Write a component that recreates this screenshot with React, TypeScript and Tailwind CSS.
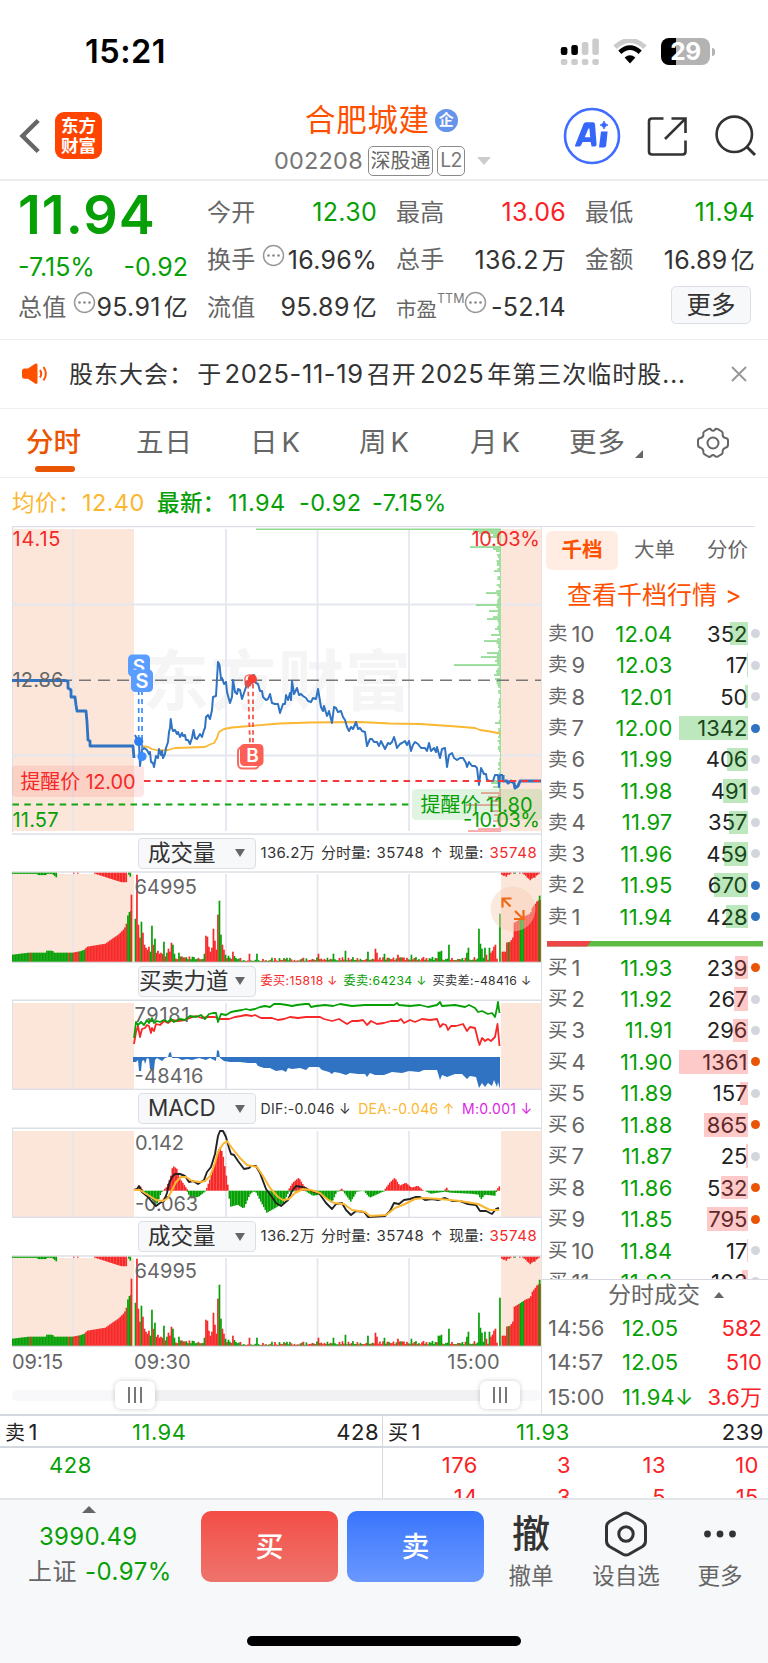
import React from 'react';
import clsx from 'clsx';

const RED = '#f62828';
const GREEN = '#06a006';
const BLUE = '#2f73c2';

type Bar = [x: number, height: number, color: string];

// small repeatable noise, so that the bars keep their shape between renders
const noise = (n: number) => {
    const v = Math.sin(n * 127.1 + 3.7) * 43758.5453;
    return v - Math.floor(v);
};

const interpolate = (stops: number[][], x: number) => {
    for (let i = 1; i < stops.length; i++) {
        if (x <= stops[i][0]) {
            const [x0, y0] = stops[i - 1];
            const [x1, y1] = stops[i];
            return y0 + ((x - x0) / (x1 - x0)) * (y1 - y0);
        }
    }
    return stops[stops.length - 1][1];
};

/* ---------- chart data ---------- */

const preOpenLine = '12,680.5 65,680.5 68,681.5 68,688 71,690 71,697 75,697 76,705 77,711 86,711 87,722 88,740 90,741 90,746 133,746 134,758';

const priceLine =
    '135,735 139,743 140,766 142,750 144,748 147,750 149,754 150,752 151,762 153,763 154,767 156,756 158,758 159,749 161,755 162,751 163,758 165,754 166,748 168,742 169,732 170,728 170.7,719 172,728 173,731 175,730 177,734 178,732 180,737 182,733 183,736 185,735 186,740 188,740 190,744 192,738 193.5,730 195,738 197,739 200,734 202,737 204,730 205,728 206,717 208,715 210,719 212,710 213,697 216,696 218,662 219.5,665 221,679 222,678 224,684 226,682 227,692 230,703 232,697 233,680 235,692 237,694 238,689 240,690 242,699 245,690 247,684 249,682 252,676 254,675 256,683 258,684 260,691 262,691 263,697 266,700 268,699 270,694 272,703 275,704 278,704 280,713 283,704 285,704 286,695 288,700 290,693 291,700 292,681 294,694 297,688 299,695 301,694 303,696 306,698 308,701 311,702 313,698 316,699 318,689 321,707 323,711 324,706 327,716 329,711 332,723 334,707 336,708 338,712 341,711 343,717 345,720 347,727 349,731 351,727 353,729 356,722 358,729 360,728 362,731 365,732 367,746 370,739 372,739 374,742 377,742 379,746 381,741 383,745 385,749 388,743 390,744 392,742 394,737 395,740 397,748 400,744 402,743 405,741 407,745 409,741 411,751 413,745 415,742 418,744 421,748 425,748 427,751 429,743 431,751 434,748 436,752 437,747 440,758 442,749 445,748 447,767 449,755 452,753 454,758 457,760 460,758 463,758 466,763 467,767 469,762 472,766 475,766 477,768 479,785 481,768 484,774 486,774 487,780 490,781 493,781 495,775 498,775 499,787 500,775 503,775';

const afterLine = '503,775 503,781 507,781 508,783 511,781 514,783 515,788 518,786 520,781 541,781';
const averageLine = '142,746 148,747 152,749 158,750.5 168,750 175,748 205,747 210,744.5 214,743 217,738 219,732 224,729 232,727.5 250,726 280,723.5 310,722.5 360,722 390,723.5 420,724 450,726 475,728 480,730 490,731.5 500,733.5';

const ladderSpikes: Record<number, number> = {
    531: 28, 533: 22, 535: 8, 537: 13, 543: 4, 547: 31, 549: 8, 551: 5, 571: 7, 593: 15, 605: 25, 611: 12, 617: 8, 619: 14, 629: 6,
    635: 10, 641: 17, 653: 14, 657: 20, 661: 6, 665: 47, 671: 5, 675: 7, 679: 6, 681: 5, 723: 6, 781: 14, 783: 10, 787: 8,
    793: 20, 797: 13, 801: 9, 805: 35, 811: 11, 815: 7, 821: 8, 829: 23, 831: 33,
};

const preOpenHeights = [[12, 7], [28, 9], [45, 9], [46, 11], [52, 11], [54, 9], [72, 9], [80, 10.5], [84, 12], [87, 15], [105, 18], [112, 23], [118, 27], [124, 33], [126, 38], [128, 49], [131, 51]];
const afterHeights = [[502, 10], [505, 10], [506, 19], [510, 20], [513, 25], [514, 39], [519, 42], [525, 46], [530, 48], [532, 54], [535, 58], [537, 61], [541, 62]];

const sessionSpikes: Bar[] = [
    [135, 43, GREEN], [136.5, 87, RED], [138, 37, RED], [139.5, 24, RED], [141, 40, GREEN], [142.5, 29, RED], [144, 17, RED], [145.5, 14, RED], [147, 12, RED],
    [148.5, 15, RED], [150, 10, GREEN], [151.5, 36, GREEN], [153, 17, RED], [154.5, 23, GREEN], [156, 9, RED], [157.5, 11, RED], [159, 8, RED], [160.5, 9, RED],
    [163.5, 20, GREEN], [166.5, 9, GREEN], [168, 13, RED], [169.5, 10, RED], [171, 19, RED], [172.5, 17, GREEN], [174, 8, GREEN], [178.5, 9, GREEN],
    [204, 8, GREEN], [205.5, 26, RED], [207, 25, RED], [208.5, 15, RED], [210, 10, RED], [211.5, 14, RED], [213, 33, RED], [214.5, 21, RED], [216, 12, RED],
    [217.5, 47, RED], [219, 61, GREEN], [220.5, 27, GREEN], [222, 17, RED], [223.5, 12, RED], [225, 7, GREEN], [228, 6, GREEN], [232.5, 10, RED], [249, 8, RED],
    [256.5, 8, GREEN], [271.5, 4, GREEN], [318, 8, RED], [333, 8, GREEN], [345, 11, GREEN], [367.5, 10, GREEN], [375, 13, RED], [376.5, 9, RED], [384, 8, GREEN],
    [397.5, 7, RED], [411, 7, GREEN], [438, 10, GREEN], [439.5, 10, GREEN], [441, 11, GREEN], [448.5, 17, GREEN], [466.5, 9, GREEN], [468, 14, GREEN],
    [478.5, 33, GREEN], [480, 18, GREEN], [481.5, 13, GREEN], [484.5, 14, GREEN], [486, 7, RED], [489, 14, GREEN], [490.5, 9, RED], [492, 11, RED],
    [493.5, 15, RED], [495, 17, RED], [499.5, 48, GREEN],
];

const volumeBars: Bar[] = [];
for (let x = 12; x < 131; x += 1.5) {
    const green = x < 29 || (x > 31 && x < 68) || (x > 69 && x < 73) || (x > 79 && x < 85) || x > 127;
    volumeBars.push([x, interpolate(preOpenHeights, x), green ? GREEN : RED]);
}
volumeBars.push([131, 67, RED]);
for (let x = 135; x < 497; x += 1.5) {
    if (sessionSpikes.some((s) => s[0] === x)) continue;
    const base = x < 165 ? 6 : x < 240 ? 3 : x < 310 ? 1.4 : 2;
    const r = noise(x);
    volumeBars.push([x, base + r * r * 3.4 - 0.6, noise(x + 9) > 0.5 ? RED : GREEN]);
}
volumeBars.push(...sessionSpikes);
for (let x = 502; x < 540; x += 1.5) {
    volumeBars.push([x, interpolate(afterHeights, x), (x > 519 && x < 524) || (x > 507 && x < 509) ? GREEN : RED]);
}
volumeBars.push([539.2, 66, GREEN]);

// unmatched orders hang from the top edge
const hangingBars: Bar[] = [];
for (let x = 12; x < 57; x += 1.5) {
    hangingBars.push([x, x > 51 ? (x - 50) * 0.85 : x > 36 && x < 46 ? 2.4 : 1.2, GREEN]);
}
for (let x = 94; x < 127; x += 1.5) {
    hangingBars.push([x, Math.min(9.5, 1 + (x - 94) * 0.32), RED]);
}
hangingBars.push([128, 2, GREEN], [129.5, 4, GREEN], [73, 1, RED], [77, 1, RED]);
[2, 3, 3, 4, 2, 2, 1, 0, 1, 1, 0, 0, 1, 0, 1, 2, 3, 5, 6, 7.5, 6, 5, 5, 3, 2, 1].forEach((h, i) => {
    hangingBars.push([501 + i * 1.5, h, i === 9 ? GREEN : RED]);
});

const sellForce =
    '134,1038 136,1022 138,1025 141,1022 144,1025 147,1020 149,1023 152,1018 154,1023 157,1021 160,1022 164,1020 168,1022 171,1019 174,1022 180,1019 185,1020 190,1016 196,1017 201,1015 205,1019 209,1014 213,1013 216,1013 218,1022 221,1014 226,1015 231,1012 236,1011 242,1010 246,1009 250,1010 255,1009 260,1007 265,1006 270,1007 274,1004 280,1004 287,1005 292,1006 297,1005 305,1004 309,1004 311,1007 316,1006 325,1005 333,1006 340,1004 352,1006 365,1005 380,1005 394,1005 397,1003 399,1005 410,1006 420,1005 428,1007 437,1005 440,1002 442,1006 455,1005 465,1007 469,1005 475,1008 478,1012 482,1011 488,1014 492,1013 495,1017 497,1008 498,1002 499.5,1013';
const buyForce =
    '134,1044 136,1032 138,1026 140,1037 142,1029 145,1028 147,1025 149,1026 151,1033 152,1028 154,1031 156,1024 160,1025 164,1021 168,1023 172,1020 178,1021 185,1020 190,1018 196,1016 202,1018 208,1017 215,1017 219,1019 224,1019 229,1019 235,1017 241,1016 246,1015 252,1016 255,1015 261,1018 266,1018 272,1018 278,1020 284,1019 290,1017 298,1018 306,1017 320,1017 324,1019 332,1021 339,1019 347,1024 352,1021 358,1021 363,1020 367,1025 371,1021 377,1024 384,1023 391,1021 398,1021 401,1019 404,1023 410,1020 415,1022 422,1019 430,1020 437,1019 440,1027 443,1024 446,1025 448,1030 451,1026 456,1026 463,1024 467,1031 470,1027 475,1028 478,1040 479.5,1045 482,1038 485,1041 488,1039 491,1041 495,1037 497.5,1024 499.5,1046';
const forceArea =
    '133,1057 133,1062 136,1062 138,1060 139,1071 141,1071 142,1061 144,1060 145,1064 147,1058 149,1059 150,1069 154,1070 155,1060 157,1058 162,1061 165,1058 168,1057 169,1053 171,1052 172,1058 178,1058 182,1060 187,1059 192,1060 199,1058 206,1060 210,1058 216,1061 217,1050 219,1051 220,1058 224,1061 230,1062 240,1062 248,1063 256,1063 258,1066 264,1068 270,1068 276,1071 282,1070 286,1072 288,1068 292,1069 300,1068 306,1070 309,1067 319,1067 322,1070 329,1072 332,1074 334,1072 340,1073 346,1075 350,1073 358,1074 365,1074 367,1077 370,1073 375,1075 384,1075 392,1072 402,1073 409,1071 419,1072 424,1070 437,1070 440,1080 442,1075 447,1077 455,1074 462,1074 467,1079 470,1076 476,1077 479,1088 482,1083 485,1087 488,1083 492,1086 494,1080 497,1087 498,1082 500,1089 500,1057';

const dif =
    '134,1190 137,1189 139,1186 142,1192 148,1197 152,1202 156,1206 160,1203 164,1201 167,1193 169,1184 172,1177 175,1174 180,1174 185,1176 189,1182 193,1181 198,1184 204,1180 207,1172 211,1167 215,1154 218,1136 220,1131 223,1131 226,1137 229,1148 231,1154 234,1155 238,1161 244,1169 249,1168 251,1166 256,1166 260,1173 266,1189 272,1197 276,1203 281,1206 288,1200 292,1191 296,1186 302,1187 307,1189 314,1192 319,1193 326,1203 332,1209 336,1204 342,1203 346,1210 351,1215 356,1211 364,1212 368,1217 385,1216 390,1211 394,1203 399,1204 404,1200 410,1199 416,1197 420,1197 425,1200 432,1199 438,1200 445,1198 452,1201 460,1201 468,1204 476,1205 480,1211 486,1211 492,1214 496,1209 499,1208';
const dea =
    '134,1190 140,1190 148,1195 156,1200 163,1201 168,1198 172,1190 176,1182 181,1177 186,1177 192,1181 200,1182 205,1181 210,1176 214,1166 218,1152 223,1144 227,1141 232,1148 240,1158 247,1165 252,1166 257,1167 263,1176 270,1188 278,1197 283,1200 289,1199 295,1193 303,1189 311,1190 320,1193 327,1199 334,1203 344,1204 352,1210 365,1212 370,1216 386,1215 395,1208 405,1204 415,1199 424,1198 440,1199 460,1201 478,1204 490,1210 499,1210';

const macdUp = [[134, 0], [137, 2], [139, 6], [141, 2], [143, 0], [162, 0], [166, 4], [170, 15], [172, 25], [176, 22], [180, 11], [186, 2], [188, 0], [205, 0], [210, 14], [215, 31], [219, 45], [222, 37], [226, 12], [228, 0], [287, 0], [292, 8], [298, 13], [303, 5], [310, 0], [338, 0], [341, 2], [343, 0], [383, 0], [389, 8], [394, 13], [399, 5], [405, 8], [411, 3], [417, 5], [423, 0], [443, 0], [446, 3], [448, 0], [495, 0], [499, 5]];
const macdDown = [[139, 0], [148, 6], [156, 14], [160, 3], [162, 0], [186, 0], [190, 8], [198, 6], [204, 1], [206, 0], [227, 0], [230, 16], [237, 14], [243, 18], [249, 4], [252, 1], [255, 1], [259, 9], [266, 22], [275, 17], [283, 12], [288, 1], [304, 0], [312, 5], [320, 4], [331, 12], [336, 1], [342, 0], [350, 11], [356, 1], [363, 0], [369, 7], [382, 1], [386, 0], [424, 0], [430, 3], [444, 1], [450, 2], [470, 3], [478, 4], [480, 9], [484, 4], [494, 5], [496, 0], [499, 0]];

/* ---------- order book ---------- */

type Level = { name: string; price: string; volume: number; dot: string };

const sells: Level[] = [
    { name: '卖10', price: '12.04', volume: 352, dot: 'bg-[#d3d6dd]' },
    { name: '卖9', price: '12.03', volume: 17, dot: 'bg-[#d3d6dd]' },
    { name: '卖8', price: '12.01', volume: 50, dot: 'bg-[#d3d6dd]' },
    { name: '卖7', price: '12.00', volume: 1342, dot: 'bg-[#2f73c2]' },
    { name: '卖6', price: '11.99', volume: 406, dot: 'bg-[#d3d6dd]' },
    { name: '卖5', price: '11.98', volume: 491, dot: 'bg-[#d3d6dd]' },
    { name: '卖4', price: '11.97', volume: 357, dot: 'bg-[#d3d6dd]' },
    { name: '卖3', price: '11.96', volume: 459, dot: 'bg-[#d3d6dd]' },
    { name: '卖2', price: '11.95', volume: 670, dot: 'bg-[#2f73c2]' },
    { name: '卖1', price: '11.94', volume: 428, dot: 'bg-[#2f73c2]' },
];

const buys: Level[] = [
    { name: '买1', price: '11.93', volume: 239, dot: 'bg-[#ea5504]' },
    { name: '买2', price: '11.92', volume: 267, dot: 'bg-[#d3d6dd]' },
    { name: '买3', price: '11.91', volume: 296, dot: 'bg-[#d3d6dd]' },
    { name: '买4', price: '11.90', volume: 1361, dot: 'bg-[#ea5504]' },
    { name: '买5', price: '11.89', volume: 157, dot: 'bg-[#d3d6dd]' },
    { name: '买6', price: '11.88', volume: 865, dot: 'bg-[#ea5504]' },
    { name: '买7', price: '11.87', volume: 25, dot: 'bg-[#d3d6dd]' },
    { name: '买8', price: '11.86', volume: 532, dot: 'bg-[#ea5504]' },
    { name: '买9', price: '11.85', volume: 795, dot: 'bg-[#ea5504]' },
    { name: '买10', price: '11.84', volume: 17, dot: 'bg-[#d3d6dd]' },
    { name: '买11', price: '11.83', volume: 103, dot: 'bg-[#d3d6dd]' },
];

function LevelRow({ level, side }: { level: Level; side: 'sell' | 'buy' }) {
    return (
        <div className="flex h-[31.44px] shrink-0 items-center pl-[6px] text-[22px] leading-none">
            <span className="flex w-[48px] items-center gap-[4px] text-[#666]">
                <span className="text-[19.5px]">{level.name[0]}</span>
                {level.name.slice(1)}
            </span>
            <span className="w-[76.5px] text-right tracking-[0.2px] text-[#06a006]">{level.price}</span>
            <span className="relative flex h-[23.5px] w-[75px] items-center justify-end text-[#222]">
                {level.volume}
                <span
                    className={clsx('absolute inset-y-0 right-0', side === 'sell' ? 'bg-[#0ca50c]/27' : 'bg-[#fa3c3c]/28')}
                    style={{ width: level.volume * 0.0507 }}
                />
            </span>
            <span className={clsx('ml-[3.5px] size-[9px] rounded-full', level.dot)} />
        </div>
    );
}

/* ---------- header parts ---------- */

function StatusBar() {
    return (
        <div className="flex h-[100px] items-center pl-[85px] pt-[3px]">
            <span className="w-[475px] pt-[2px] text-[32.5px] font-semibold tracking-[0.5px] text-black">15:21</span>
            <svg width="39" height="28" className="mt-[-1px]">
                {[0, 1, 2, 3].map((i) => (
                    <g key={i}>
                        <rect x={0.8 + i * 10.5} y={[10, 8, 5, 1.5][i]} width="6.6" height={[8, 10, 13, 16.5][i]} rx="2.2" fill={i < 2 ? '#000' : '#ccc'} />
                        <rect x={0.8 + i * 10.5} y="22" width="6.6" height="6" rx="2.2" fill="#ccc" />
                    </g>
                ))}
            </svg>
            <svg width="34" height="26" viewBox="0 0 34 26" className="ml-[14px]">
                <path d="M2 8.2Q17-5.2 32 8.2" fill="none" stroke="#ccc" strokeWidth="5" />
                <path d="M6.8 13.2Q17 4 27.2 13.2" fill="none" stroke="#000" strokeWidth="4.6" />
                <path d="M11.6 18.4Q17 14 22.4 18.4L17 24.4Z" fill="#000" />
            </svg>
            <div className="relative ml-[14px] h-[27px] w-[49px] rounded-[8px] bg-[linear-gradient(90deg,#000_15px,#b3b3b3_15px)] text-center text-[24.5px] font-bold leading-[27px] tracking-[-0.5px] text-white">29</div>
            <div className="ml-[1.5px] h-[8px] w-[3px] rounded-r-full bg-[#b3b3b3]" />
        </div>
    );
}

function TitleBar() {
    return (
        <header className="flex h-[81px] border-b-2 border-[#ececec]">
            <svg width="24" height="40" className="ml-[18px] mt-[16px]" fill="none" stroke="#666" strokeWidth="4.4">
                <path d="M20.2 4.5L4.5 20L20.2 35.5" />
            </svg>
            <div className="ml-[13px] mt-[12px] flex h-[47px] w-[47px] flex-col items-center justify-center rounded-[9px] bg-[#ff4400] text-[17.5px] font-bold leading-[19.5px] text-white">
                <span>东方</span>
                <span>财富</span>
            </div>
            <div className="ml-[158px] mt-[4px] w-[303px]">
                <div className="ml-[45px] flex h-[32px] items-center">
                    <span className="text-[30.5px] leading-none tracking-[0.7px] text-[#ff5000]">合肥城建</span>
                    <span className="ml-[5px] flex size-[23px] items-center justify-center rounded-full bg-[#6594ea] text-[15px] font-bold text-white">企</span>
                </div>
                <div className="ml-[14px] mt-[9px] flex h-[32px] items-center text-[#777]">
                    <span className="w-[94px] text-[23.5px] tracking-[0.2px]">002208</span>
                    <span className="flex h-[30px] w-[65px] items-center justify-center rounded-[5px] border-[1.5px] border-[#8a8a8a] text-[20px] text-[#666]">深股通</span>
                    <span className="ml-[4px] flex h-[30px] w-[28px] items-center justify-center rounded-[5px] border-[1.5px] border-[#8a8a8a] text-[19.5px] tracking-[-0.8px]">L2</span>
                    <span className="ml-[12px] border-x-[7px] border-t-[8px] border-x-transparent border-t-[#ccc]" />
                </div>
            </div>
            <svg width="58" height="58" viewBox="0 0 58 58" className="mt-[7px]">
                <circle cx="29" cy="29" r="27" fill="none" stroke="#3f6dff" strokeWidth="2.6" />
                <g fill="#3567fb">
                    <path fillRule="evenodd" d="M12 38.5L20.5 17Q21.2 15.2 23 15.2H30Q31.8 15.2 32 17L33.6 37.5Q33.6 39.4 31.8 39.4H28.6L27.6 35H19.7L18 38.2Q17.4 39.4 16 39.4H12.6Q11.7 39.4 12 38.5ZM21.8 30.2H27.2L26.4 21.5H25.4Z" />
                    <path d="M38 24.5H44.6L43.2 38.6Q43 40.4 41.2 40.4H36Z" />
                    <path d="M41 14Q41.7 17.3 45 18Q41.7 18.8 41 22Q40.3 18.8 37 18Q40.3 17.3 41 14Z" stroke="#3567fb" strokeWidth="0.8" />
                </g>
            </svg>
            <svg width="42" height="42" viewBox="0 0 42 42" className="ml-[25px] mt-[15px]" fill="none" stroke="#333" strokeWidth="2.6">
                <path d="M17.5 3.5H6Q3 3.5 3 6.5V36.5Q3 39.5 6 39.5H36.5Q39.5 39.5 39.5 36.5V25.5" />
                <path d="M25.5 3.5H39.5V18M39.2 3.8L19 24" />
            </svg>
            <svg width="44" height="44" viewBox="0 0 44 44" className="ml-[26px] mt-[14px]" fill="none" stroke="#333" strokeWidth="2.6">
                <circle cx="20.3" cy="20.3" r="17.7" />
                <path d="M32.5 32.5L41 41" strokeWidth="3" />
            </svg>
        </header>
    );
}

function More() {
    return (
        <svg width="23" height="23" viewBox="0 0 23 23" className="shrink-0 -translate-y-[5px]">
            <circle cx="11.5" cy="11.5" r="10" fill="none" stroke="#999" strokeWidth="1.5" />
            {[6.5, 11.5, 16.5].map((cx) => (
                <circle key={cx} cx={cx} cy="11.5" r="1.3" fill="#888" />
            ))}
        </svg>
    );
}

function Field({ label, value, icon, color = 'text-[#333]' }: { label: React.ReactNode; value: string; icon?: boolean; color?: string }) {
    return (
        <div className="flex h-[47.5px] items-center whitespace-nowrap text-[25px] leading-none">
            <span className="text-[24px] tracking-[0.3px] text-[#666]">{label}</span>
            {icon && <span className="ml-[6px]"><More /></span>}
            <span className={clsx('ml-auto tracking-[0.3px]', color)}>
                {value.replace(/[亿万]/, '')}
                {/[亿万]/.test(value) && <span className="ml-[3px] text-[24px]">{value.slice(-1)}</span>}
            </span>
        </div>
    );
}

function Quote() {
    return (
        <section className="flex h-[159px] border-b border-[#efefef] pt-[8px]">
            <div className="ml-[18px] w-[170px]">
                <div className="h-[54px] text-[54px] font-semibold leading-[52px] tracking-[1px] text-[#06a006]">11.94</div>
                <div className="flex h-[41px] items-center justify-between pt-[8px] text-[25px] text-[#06a006]">
                    <span>-7.15%</span>
                    <span>-0.92</span>
                </div>
                <Field label="总值" value="95.91亿" icon />
            </div>
            <div className="ml-[19px] w-[170px]">
                <Field label="今开" value="12.30" color="text-[#06a006]" />
                <Field label="换手" value="16.96%" icon />
                <Field label="流值" value="95.89亿" />
            </div>
            <div className="ml-[19px] w-[170px]">
                <Field label="最高" value="13.06" color="text-[#fa2226]" />
                <Field label="总手" value="136.2万" />
                <div className="flex h-[47.5px] items-center text-[25px] leading-none text-[#333]">
                    <span className="mt-[4px] text-[20.5px] text-[#666]">市盈</span>
                    <span className="-mt-[18px] text-[12.5px] text-[#777]">TTM</span>
                    <More />
                    <span className="ml-auto tracking-[0.3px]">-52.14</span>
                </div>
            </div>
            <div className="ml-[19px] w-[170px]">
                <Field label="最低" value="11.94" color="text-[#06a006]" />
                <Field label="金额" value="16.89亿" />
                <div className="ml-[86px] mt-[2px] flex h-[38px] w-[80px] items-center justify-center rounded-[5px] border border-[#dcdfe6] bg-[#f7f8fa] text-[24.5px] text-[#333]">更多</div>
            </div>
        </section>
    );
}

function Notice() {
    return (
        <section className="flex h-[69px] items-center border-b border-[#f0f0f0] text-[24px] text-[#333]">
            <svg width="26" height="22" viewBox="0 0 26 22" className="ml-[22px]" fill="none" stroke="#ff5000" strokeWidth="2">
                <path d="M0 8Q0 5.5 2.5 5.5H6L13 .8Q15.5-.2 15.5 2V19.5Q15.5 21.5 13 20.6L6 15.8H2.5Q0 15.8 0 13.4Z" fill="#ff5000" stroke="none" />
                <path d="M18 7Q20.4 10.7 18 14.6M21.5 4Q26.2 10.7 21.5 17.4" />
            </svg>
            <span className="ml-[21px] flex w-[617px] items-baseline justify-between whitespace-nowrap">
                <span className="tracking-[1px]">股东大会：</span>
                <span>于</span>
                <span className="text-[25.5px] tracking-[0.6px]">2025-11-19</span>
                <span className="tracking-[1px]">召开</span>
                <span className="text-[25.5px] tracking-[0.3px]">2025</span>
                <span className="tracking-[1px]">年第三次临时股...</span>
            </span>
            <svg width="16" height="16" viewBox="0 0 16 16" className="ml-[45px]" stroke="#999" strokeWidth="2">
                <path d="M1 1L15 15M15 1L1 15" />
            </svg>
        </section>
    );
}

function PeriodTabs() {
    return (
        <nav className="flex h-[69px] items-center whitespace-nowrap border-b border-[#efefef] pl-[26px] text-[27.5px] text-[#666]">
            <div className="relative w-[110px] font-medium text-[#ea5504]">
                分时
                <span className="absolute -bottom-[8px] left-[9px] h-[6px] w-[40px] rounded-full bg-[#ea5504]" />
            </div>
            <div className="w-[114px] tracking-[1px]">五日</div>
            <div className="w-[109px]">日<span className="ml-[4px]">K</span></div>
            <div className="w-[111px]">周<span className="ml-[4px]">K</span></div>
            <div className="w-[99px]">月<span className="ml-[4px]">K</span></div>
            <div className="tracking-[1px]">更多</div>
            <span className="ml-[9px] mt-[22px] border-b-[8px] border-l-[8px] border-b-[#666] border-l-transparent" />
            <svg width="34" height="34" viewBox="0 0 34 34" className="ml-[53px]" fill="none" stroke="#666" strokeWidth="2" strokeLinejoin="round">
                <path d="M12.2 3.2Q14.3 2 15.2 4Q17 5.5 18.8 4Q19.8 2 21.8 3.2L25.8 5.5Q27.2 6.6 26.6 9Q27 11.5 29.4 12Q32 12.2 32 14.5V18.5Q32 21.3 29.4 21.7Q27 22.4 26.6 25Q27.2 27.2 25.8 28.2L21.8 30.5Q19.8 31.4 18.8 29.8Q17 28.4 15.2 29.8Q14.3 31.5 12.2 30.5L8.2 28.2Q6.8 27.2 7.4 25Q7 22.4 4.6 21.7Q2 21.3 2 18.5V14.5Q2 12.2 4.6 12Q7 11.5 7.4 9Q6.8 6.6 8.2 5.5Z" />
                <circle cx="17" cy="17" r="5.5" />
            </svg>
        </nav>
    );
}

/* ---------- charts ---------- */

function Grid({ top, bottom }: { top: number; bottom: number }) {
    return (
        <g>
            <rect x="12.5" y={top + 3} width="121.5" height={bottom - top - 4} fill="#fce6da" />
            <rect x="501" y={top + 3} width="40.5" height={bottom - top - 4} fill="#fce6da" />
            {[73, 226, 317.5, 409].map((x) => (
                <path key={x} d={`M${x} ${top + 3}V${bottom - 1}`} stroke="#e4e7ee" strokeWidth="1.8" />
            ))}
            <path d={`M12.5 ${top}V${bottom}`} stroke="#dcdfe5" />
        </g>
    );
}

function Polyline({ points, color, width = 1.8 }: { points: string; color: string; width?: number }) {
    return <polyline points={points} fill="none" stroke={color} strokeWidth={width} strokeLinejoin="round" />;
}

function Label({ x, y, w, color = '#666', size = 20, children }: { x: number; y: number; w: number; color?: string; size?: number; children: string }) {
    return (
        <text x={x} y={y} textLength={w} fill={color} fontSize={size}>
            {children}
        </text>
    );
}

function PriceChart() {
    const ladder = [];
    for (let y = 531; y < 832; y += 2) {
        const len = ladderSpikes[y] ?? 0.8 + noise(y) * (y < 690 ? 4 : 2.6);
        ladder.push(<rect key={y} x={501 - len} y={y - 0.8} width={len} height="1.7" fill={y > 789 ? '#f9a0a0' : '#8fd98f'} />);
    }
    return (
        <svg width="530" height="309" viewBox="12 526 530 309" className="block">
            <text x="143" y="705" fontSize="66" fontWeight="700" textLength="268" fill="#f5f5f5">东方财富</text>
            <Grid top={526} bottom={832} />
            <path d="M12 604.5H542M12 755.5H542" stroke="#e4e7ee" strokeWidth="1.8" />
            <path d="M12 526.5H542M12 834H542" stroke="#dcdfe5" strokeWidth="1.4" />
            <path d="M256 529.3H501" stroke="#8fd98f" strokeWidth="1.5" />
            {ladder}
            <path d="M60 680.3H541" stroke="#777" strokeWidth="1.6" strokeDasharray="12 7" />
            <Polyline points={averageLine} color="#fbb731" />
            <Polyline points={preOpenLine} color={BLUE} width={2.8} />
            <Polyline points={priceLine} color={BLUE} width={2} />
            <Polyline points={afterLine} color={BLUE} width={3} />
            <path d="M144 781H541" stroke="#f4383d" strokeWidth="2" strokeDasharray="6.5 5.3" />
            <path d="M12.5 804.5H412" stroke="#12a512" strokeWidth="2" strokeDasharray="6.5 5.3" />

            {/* own trades: sold at the open, bought later */}
            <path d="M138.7 690V740M142 690V752" stroke="#3b89fb" strokeWidth="1.7" strokeDasharray="5 4" />
            <circle cx="138.7" cy="741.5" r="4.6" fill="#2f7ff0" />
            <circle cx="142" cy="756.5" r="4.6" fill="#3f8cff" />
            <rect x="128" y="654.5" width="22" height="22" rx="4.5" fill="#5b9dff" />
            <text x="139" y="672.5" textAnchor="middle" fontSize="19" fontWeight="600" fill="#fff">S</text>
            <rect x="131" y="669.5" width="22" height="22.5" rx="4.5" fill="#5b9dff" />
            <text x="142" y="688.3" textAnchor="middle" fontSize="20" fontWeight="600" fill="#fff">S</text>
            <path d="M248 684L250 744M253 684V744" stroke="#f4574e" strokeWidth="1.8" strokeDasharray="4.5 3.2" />
            <circle cx="249.5" cy="679.5" r="4.6" fill="#fff" stroke="#f4574e" strokeWidth="1.4" />
            <circle cx="248" cy="683.5" r="3.5" fill="#d9504c" />
            <circle cx="252.3" cy="679" r="4.6" fill="#fa4034" />
            <rect x="238" y="747" width="21" height="21.5" rx="4.5" fill="#fff" stroke="#fa6a60" strokeWidth="2" />
            <rect x="240" y="744" width="23.5" height="22" rx="4.5" fill="#fb5f55" />
            <text x="252.6" y="762" textAnchor="middle" fontSize="19" fontWeight="600" fill="#fff">B</text>

            <Label x={12.5} y={546} w={48} color={RED}>14.15</Label>
            <Label x={12.5} y={686.5} w={51}>12.86</Label>
            <Label x={12.5} y={826.5} w={46} color={GREEN}>11.57</Label>
            <Label x={471.5} y={546} w={68.5} color={RED}>10.03%</Label>
            <rect x="12" y="765.5" width="132" height="31.5" rx="4" fill="#fa3c3c" fillOpacity="0.13" />
            <Label x={20.5} y={788.5} w={115} color={RED}>提醒价 12.00</Label>
            <rect x="412" y="789" width="130" height="31" rx="4" fill="#0ca50c" fillOpacity="0.12" />
            <Label x={420.5} y={812} w={112} color={GREEN}>提醒价 11.80</Label>
            <Label x={463} y={827} w={77} color={GREEN}>-10.03%</Label>
        </svg>
    );
}

function IndicatorHeader({ name, height, children }: { name: string; height: string; children: React.ReactNode }) {
    return (
        <div className={clsx('flex items-center', height)}>
            <div className="ml-[126px] flex h-[31px] w-[118px] items-center justify-between overflow-hidden rounded-[4px] border border-[#dcdfe6] bg-[#f7f8fa] pr-[10px] text-[22.5px] leading-none text-[#333]">
                <span className={clsx('whitespace-nowrap', name.length < 4 || name === 'MACD' ? 'ml-[9px]' : 'ml-[0px] tracking-[-0.2px]')}>{name}</span>
                <span className="border-x-[5px] border-t-[8px] border-x-transparent border-t-[#666]" />
            </div>
            {children}
        </div>
    );
}

function VolumeHeader({ height }: { height: string }) {
    return (
        <IndicatorHeader name="成交量" height={height}>
            <div className="ml-[4.5px] flex w-[277px] justify-between whitespace-nowrap text-[15px] text-[#333]">
                <span className="tracking-[0.3px]">136.2万</span>
                <span>分时量:</span>
                <span className="tracking-[0.6px]">35748</span>
                <span>↑</span>
                <span>现量:</span>
                <span className="tracking-[0.6px] text-[#f62828]">35748</span>
            </div>
        </IndicatorHeader>
    );
}

function VolumeChart() {
    return (
        <svg width="530" height="92" viewBox="12 871 530 92" className="block">
            <Grid top={871} bottom={962} />
            <path d="M12 872H542M12 962.3H542" stroke="#dcdfe5" strokeWidth="1.6" />
            {volumeBars.map(([x, h, color], i) => (
                <rect key={i} x={x - 0.4} y={961.7 - h} width="1.7" height={h} fill={color} />
            ))}
            {hangingBars.map(([x, h, color], i) => (
                <rect key={i} x={x} y="872.7" width="1.6" height={h} fill={color} />
            ))}
            <Label x={134.5} y={894} w={62.5}>64995</Label>
        </svg>
    );
}

function ForceChart() {
    return (
        <svg width="530" height="91" viewBox="12 999 530 91" className="block">
            <Grid top={1000} bottom={1090} />
            <path d="M12 1000.2H542M12 1089.4H542" stroke="#dcdfe5" strokeWidth="1.4" />
            <polygon points={forceArea} fill={BLUE} />
            <Label x={134.5} y={1022} w={55}>79181</Label>
            <Label x={134.5} y={1083} w={69}>-48416</Label>
            <Polyline points={buyForce} color={RED} />
            <Polyline points={sellForce} color={GREEN} />
        </svg>
    );
}

function MacdChart() {
    const columns = [];
    for (let x = 134; x < 499.5; x += 1.5) {
        const up = interpolate(macdUp, x);
        const down = interpolate(macdDown, x);
        if (up > 0) columns.push(<rect key={`u${x}`} x={x} y={1190.7 - up} width="1.6" height={up} fill={RED} />);
        if (down > 0) columns.push(<rect key={`d${x}`} x={x} y="1190.7" width="1.6" height={down} fill={GREEN} />);
    }
    return (
        <svg width="530" height="91" viewBox="12 1127 530 91" className="block">
            <Grid top={1128} bottom={1218} />
            <path d="M12 1128.2H542M12 1217.4H542" stroke="#dcdfe5" strokeWidth="1.4" />
            {columns}
            <Label x={135} y={1150} w={49}>0.142</Label>
            <Label x={135} y={1211} w={63}>-0.063</Label>
            <Polyline points={dif} color="#222" width={1.9} />
            <Polyline points={dea} color="#fbb731" width={2} />
        </svg>
    );
}

function SliderThumb() {
    return (
        <span className="z-10 flex h-[28px] w-[40px] items-center justify-center gap-[4px] rounded-[6px] bg-white shadow-[0_0_5px_rgba(0,0,0,0.2)]">
            <i className="h-[16px] w-[2px] bg-[#777]" />
            <i className="h-[16px] w-[2px] bg-[#777]" />
            <i className="h-[16px] w-[2px] bg-[#777]" />
        </span>
    );
}

function Charts() {
    return (
        <div className="w-[542px] border-r-[1.5px] border-[#dcdfe5] pl-[12px]">
            <PriceChart />
            <VolumeHeader height="h-[36px]" />
            <div className="relative">
                <VolumeChart />
                <svg width="46" height="46" viewBox="0 0 46 46" className="absolute left-[478px] top-[15px]" fill="none" stroke="#ee6a14" strokeWidth="2.2">
                    <circle cx="23" cy="23" r="22.5" fill="#f9ceb5" fillOpacity="0.45" stroke="none" />
                    <path d="M12.5 21.5V12.5H21.5M12.8 12.8L20.5 20.5M33.5 24V33H24M33 32.8L25 25" />
                </svg>
            </div>
            <IndicatorHeader name="买卖力道" height="h-[36px]">
                <div className="ml-[4.5px] flex w-[271px] justify-between whitespace-nowrap text-[12.2px] tracking-[0.35px] text-[#333]">
                    <span className="text-[#f62828]">委买:15818 ↓</span>
                    <span className="text-[#06a006]">委卖:64234 ↓</span>
                    <span>买卖差:-48416 ↓</span>
                </div>
            </IndicatorHeader>
            <ForceChart />
            <IndicatorHeader name="MACD" height="h-[37px]">
                <div className="ml-[4.5px] flex w-[272px] justify-between whitespace-nowrap text-[14px] tracking-[0.3px] text-[#333]">
                    <span>DIF:-0.046 ↓</span>
                    <span className="text-[#fbb731]">DEA:-0.046 ↑</span>
                    <span className="text-[#dc1ee6]">M:0.001 ↓</span>
                </div>
            </IndicatorHeader>
            <MacdChart />
            <VolumeHeader height="h-[37px]" />
            <VolumeChart />
            <div className="flex h-[29px] items-center text-[20px] text-[#666]">
                <span className="w-[122px]">09:15</span>
                <span className="tracking-[0.2px]">09:30</span>
                <span className="ml-auto mr-[41px] tracking-[0.3px]">15:00</span>
            </div>
            <div className="flex h-[38px] items-center">
                <div className="flex h-[11px] w-full items-center rounded-full bg-[#f8f8fa]">
                    <span className="w-[103px]" />
                    <SliderThumb />
                    <span className="h-[11px] w-[325px] bg-[#f1f1f3]" />
                    <SliderThumb />
                </div>
            </div>
        </div>
    );
}

function OrderBook() {
    const ticks = [
        { time: '14:56', price: '12.05', volume: '582' },
        { time: '14:57', price: '12.05', volume: '510' },
        { time: '15:00', price: '11.94↓', volume: '3.6万' },
    ];
    return (
        <div className="flex w-[226px] flex-col">
            <div className="flex h-[753px] shrink-0 flex-col overflow-hidden">
                <div className="mr-[13px] flex shrink-0 items-center border-t-[1.4px] border-[#dcdfe5] pl-[4px] pt-[4px] text-[20.5px] text-[#666]">
                    <span className="flex h-[39px] w-[72px] items-center justify-center rounded-[6px] bg-[#ffece3] font-bold text-[#ff5000]">千档</span>
                    <span className="ml-[16px]">大单</span>
                    <span className="ml-[32px]">分价</span>
                </div>
                <div className="flex h-[48px] shrink-0 items-center pl-[25px] pt-[4px] text-[25px] text-[#ff5000]">
                    查看千档行情<span className="ml-[8px]">&gt;</span>
                </div>
                {sells.map((level) => (
                    <LevelRow key={level.name} level={level} side="sell" />
                ))}
                <svg width="216" height="6" className="mb-[5px] ml-[5px] mt-[8.5px] shrink-0">
                    <rect width="216" height="5.5" fill="#5dbb43" />
                    <path d="M0 0H44L40 5.5H0Z" fill="#ee4646" />
                </svg>
                {buys.map((level) => (
                    <LevelRow key={level.name} level={level} side="buy" />
                ))}
            </div>
            <div className="flex h-[31.5px] shrink-0 items-center border-t-[1.5px] border-[#d5d8de] pl-[66px] text-[23px] leading-none text-[#666]">
                分时成交
                <span className="ml-[14px] border-x-[5px] border-b-[6px] border-x-transparent border-b-[#666]" />
            </div>
            {ticks.map((tick) => (
                <div key={tick.time} className="flex h-[34.6px] shrink-0 items-center whitespace-nowrap pl-[6px] text-[22px] leading-none">
                    <span className="w-[74px] text-[#666]">{tick.time}</span>
                    <span className="w-[70px] tracking-[0.2px] text-[#06a006]">{tick.price}</span>
                    <span className="ml-auto mr-[6px] text-[#fa2226]">{tick.volume}</span>
                </div>
            ))}
        </div>
    );
}

/* ---------- bottom ---------- */

function Queues() {
    return (
        <section className="grid h-[84px] grid-cols-[383px_385px] overflow-hidden border-t-2 border-[#d5d8de] text-[22px] leading-none tracking-[0.5px]">
            <div className="border-r-[1.5px] border-[#d5d8de]">
                <div className="flex h-[32px] items-center border-b-2 border-[#d5d8de] pl-[5px] pr-[3px] pt-[2px] text-[#222]">
                    <span className="w-[127px]"><span className="mr-[3px] text-[20px]">卖</span>1</span>
                    <span className="text-[#06a006]">11.94</span>
                    <span className="ml-auto">428</span>
                </div>
                <div className="flex h-[34px] items-center pl-[49px] text-[#06a006]">428</div>
            </div>
            <div>
                <div className="flex h-[32px] items-center border-b-2 border-[#d5d8de] pl-[5px] pr-[4px] pt-[2px] text-[#222]">
                    <span className="w-[128px]"><span className="mr-[3px] text-[20px]">买</span>1</span>
                    <span className="text-[#06a006]">11.93</span>
                    <span className="ml-auto">239</span>
                </div>
                {[['176', '3', '13', '10'], ['14', '3', '5', '15']].map((row, i) => (
                    <div key={i} className="grid h-[32px] grid-cols-[95px_93px_95px_93px] items-center pt-[2px] text-right text-[#fa2226]">
                        {row.map((n, j) => (
                            <span key={j}>{n}</span>
                        ))}
                    </div>
                ))}
            </div>
        </section>
    );
}

function BottomBar() {
    return (
        <footer className="h-[165px] border-t-2 border-[#e3e5e9] bg-[#f7f8fa]">
            <div className="flex h-[136px] pt-[6px]">
                <div className="flex w-[201px] flex-col">
                    <span className="ml-[82px] w-[14px] border-x-[7px] border-b-[7px] border-x-transparent border-b-[#666]" />
                    <span className="ml-[39px] mt-[8px] text-[24px] leading-[32px] tracking-[0.3px] text-[#06a006]">3990.49</span>
                    <span className="ml-[28px] mt-[3px] flex items-center gap-[8px] text-[24px] leading-[32px] tracking-[0.5px] text-[#06a006]">
                        <span className="text-[#666]">上证</span>-0.97%
                    </span>
                </div>
                <div className="mt-[5px] flex h-[71px] w-[137px] items-center justify-center rounded-[10px] bg-gradient-to-b from-[#f34d46] to-[#ee736c] text-[28px] font-medium text-white">买</div>
                <div className="ml-[9px] mt-[5px] flex h-[71px] w-[137px] items-center justify-center rounded-[10px] bg-gradient-to-b from-[#3a75fb] to-[#6a98ff] text-[28px] font-medium text-white">卖</div>
                <div className="ml-[14px] flex w-[66px] flex-col items-center text-[22.5px] text-[#666]">
                    <span className="mt-[6px] text-[38px] font-medium leading-[42px] text-[#333]">撤</span>
                    <span className="mt-[6px] leading-[32px]">撤单</span>
                </div>
                <div className="ml-[19px] flex w-[86px] flex-col items-center text-[22.5px] text-[#666]">
                    <svg width="44" height="46" viewBox="0 0 44 46" className="mt-[5px]" fill="none" stroke="#333" strokeWidth="3">
                        <path d="M19 2.8Q22 1.2 25 2.8L38.5 10.5Q41.5 12.4 41.5 16V30Q41.5 33.6 38.5 35.5L25 43.2Q22 44.8 19 43.2L5.5 35.5Q2.5 33.6 2.5 30V16Q2.5 12.4 5.5 10.5Z" />
                        <circle cx="22" cy="23" r="7.2" />
                    </svg>
                    <span className="mt-[3px] leading-[32px]">设自选</span>
                </div>
                <div className="ml-[18px] flex w-[66px] flex-col items-center text-[22.5px] text-[#666]">
                    <svg width="34" height="46" className="mt-[5px]" fill="#333">
                        <circle cx="4.5" cy="23" r="3.4" />
                        <circle cx="17" cy="23" r="3.4" />
                        <circle cx="29.5" cy="23" r="3.4" />
                    </svg>
                    <span className="mt-[3px] leading-[32px]">更多</span>
                </div>
            </div>
            <div className="ml-[247px] h-[10px] w-[274px] rounded-full bg-black" />
        </footer>
    );
}

export default function App() {
    return (
        <div className="h-[1663px] w-[768px] overflow-hidden bg-white font-['Inter','Noto_Sans_CJK_SC',sans-serif]">
            <StatusBar />
            <TitleBar />
            <Quote />
            <Notice />
            <PeriodTabs />
            <div className="flex h-[48px] items-center whitespace-nowrap pl-[12px] pt-[1px] text-[23.5px] tracking-[0.4px] text-[#06a006]">
                <span className="w-[70px] text-[22.5px] text-[#fbb731]">均价：</span>
                <span className="w-[75px] text-[#fbb731]">12.40</span>
                <span className="w-[71px] text-[22.5px] font-medium">最新：</span>
                <span className="w-[71px]">11.94</span>
                <span className="w-[73px]">-0.92</span>
                <span>-7.15%</span>
            </div>
            <div className="flex h-[888px]">
                <Charts />
                <OrderBook />
            </div>
            <Queues />
            <BottomBar />
        </div>
    );
}
